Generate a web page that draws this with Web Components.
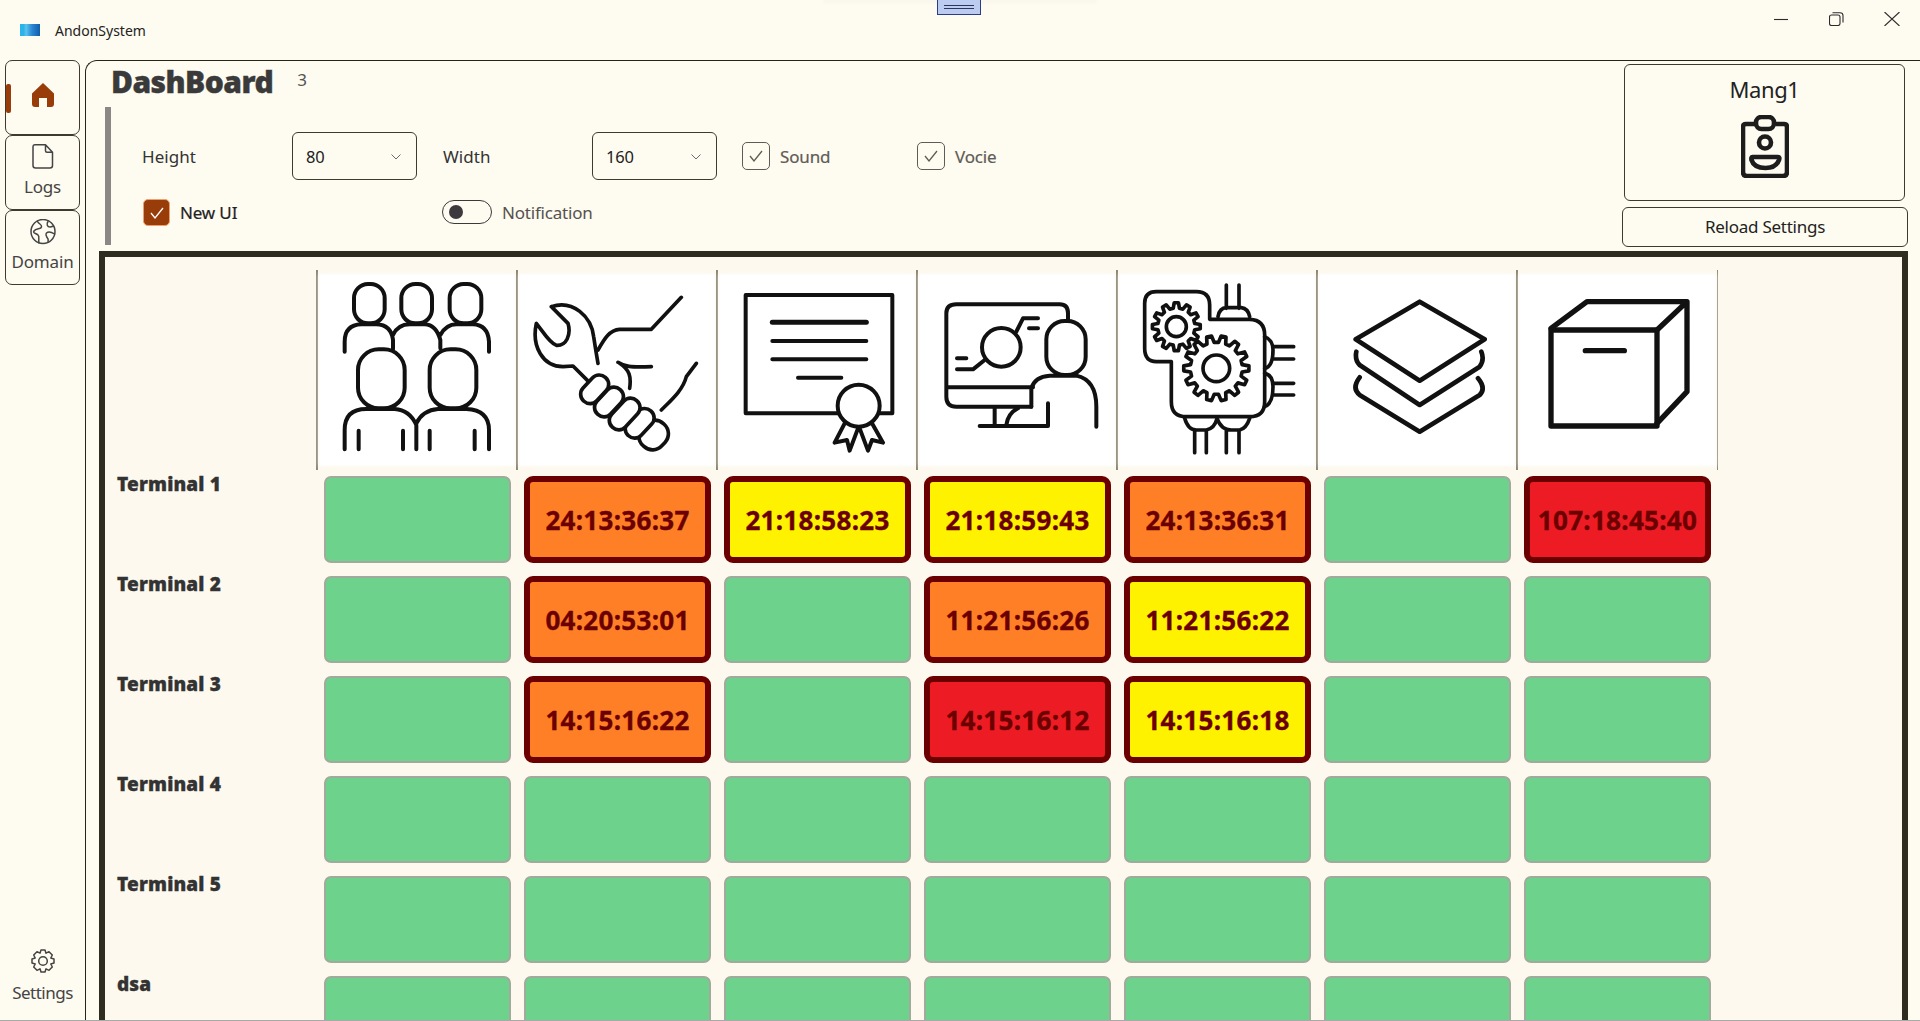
<!DOCTYPE html>
<html lang="en"><head><meta charset="utf-8"><title>AndonSystem</title>
<style>
html,body{margin:0;padding:0;background:#fefbf0;height:100%;overflow:hidden;font-family:"Noto Sans","Open Sans",sans-serif;color:#333}
</style></head><body>
<andon-app></andon-app>
<script>
function def(name, css, html){
  class C extends HTMLElement{
    constructor(){super();const r=this.attachShadow({mode:'open'});
      const h=typeof html==='function'?html(this):html;
      r.innerHTML='<style>'+css+'</style>'+h;}
  }
  customElements.define(name,C);
}
const a=(e,n,d='')=>e.getAttribute(n)??d;

function gear(cx,cy,ro,ri,n){
  let d='';const st=Math.PI*2/n;
  for(let i=0;i<n;i++){
    const t=i*st;
    const p=[[t-st*.32,ri],[t-st*.17,ro],[t+st*.17,ro],[t+st*.32,ri]];
    p.forEach((q,j)=>{const x=cx+q[1]*Math.cos(q[0]),y=cy+q[1]*Math.sin(q[0]);d+=(i==0&&j==0?'M':'L')+x.toFixed(1)+' '+y.toFixed(1)+' ';});
  }
  return d+'Z';
}

const ICONS={
 people:['22 30 600 600',12,`
  <rect x="133" y="72" width="92" height="118" rx="42"/><rect x="275" y="72" width="92" height="118" rx="42"/><rect x="420" y="72" width="95" height="118" rx="42"/>
  <path d="M105 275V245Q105 195 155 193H200Q245 195 250 240V268M250 225Q265 193 300 193H345Q380 195 392 240V265M392 225Q410 193 440 193H490Q535 195 538 245V275"/>
  <rect x="145" y="268" width="140" height="177" rx="62"/><rect x="360" y="268" width="140" height="177" rx="62"/>
  <path d="M105 568V510Q105 447 170 447H255Q300 450 320 495V568M320 490Q340 450 385 447H470Q538 450 538 510V568M147 512V568M280 512V568M360 512V568M495 512V568"/>`],
 wrench:['622 30 600 600',11,`
  <path d="M725 140C790 118 845 170 852 230C855 250 858 270 865 310M725 140L775 190C785 225 770 258 740 256C720 250 700 215 680 190C665 260 700 320 760 320L790 318L840 368"/>
  <path d="M865 270C885 235 900 210 930 208H1025L1115 112M925 307C945 320 960 322 1025 320M930 310C960 330 965 350 960 385M1055 450C1085 420 1120 390 1130 350L1160 310"/>
  <g fill="#fff">
  <rect x="-45" y="-40" width="90" height="80" rx="38" transform="translate(1032 525) rotate(-47)"/>
  <rect x="-50" y="-28" width="100" height="56" rx="27" transform="translate(990 490) rotate(-47)"/>
  <rect x="-54" y="-28" width="108" height="56" rx="27" transform="translate(945 462) rotate(-47)"/>
  <rect x="-50" y="-28" width="100" height="56" rx="27" transform="translate(898 426) rotate(-47)"/>
  <rect x="-48" y="-28" width="96" height="56" rx="27" transform="translate(855 388) rotate(-47)"/>
  </g>`],
 cert:['22 30 600 600',12,`
  <path d="M385 460H108V105H548V460H510"/><circle cx="447" cy="437" r="63"/>
  <path d="M405 490L375 548L412 540L420 572L445 505M487 490L520 548L487 540L475 572L450 505"/>
  <path stroke-width="15" d="M188 187H470"/><path d="M188 243H470M188 298H470M265 353H395"/>`],
 monitor:['622 30 600 600',12,`
  <path d="M1075 180V160Q1075 133 1050 133H740Q710 133 710 160V410Q710 440 740 440H965M710 382H970M855 445V495M925 445Q895 460 890 495M810 498H1015V430"/>
  <rect x="1010" y="183" width="118" height="162" rx="55"/>
  <path d="M965 440V385Q975 350 1020 347H1100Q1160 360 1160 440V500"/>
  <circle cx="875" cy="262" r="58"/>
  <path d="M920 215L940 175H985M958 205H985M742 295H770M742 328H790L825 300"/>`],
 machine:['22 30 600 600',11,`
  <path d="M185 305H140Q105 305 105 265V130Q105 95 140 95H260Q300 95 300 135V178H420Q465 180 465 225V425Q465 470 420 470H230Q185 470 185 425V305"/>
  <path fill="#fff" d="${gear(200,200,72,56,12)}"/><circle cx="200" cy="200" r="30"/>
  <path fill="#fff" d="${gear(320,325,98,78,14)}"/><circle cx="320" cy="325" r="40"/>
  <path d="M325 170Q330 143 350 143H395Q415 145 420 170M350 145V75M388 145V75M465 230Q490 240 490 270Q490 320 465 325M465 340Q490 345 490 380Q490 430 465 440M490 260H552M490 297H552M490 370H552M490 405H552M225 475Q235 510 260 510H290Q315 505 322 475M322 475Q335 510 365 510H390Q410 505 420 475M255 510V578M290 510V578M350 510V578M388 510V578"/>`],
 layers:['622 30 600 600',14,`
  <path d="M740 275Q735 300 750 315L930 435L1110 320Q1125 300 1115 275"/>
  <path d="M750 352Q725 385 750 405L930 515L1110 405Q1130 385 1105 355"/>
  <path fill="#fff" d="M930 125L1125 238L930 362L738 238Z"/>`],
 box:['110 30 600 600',16,`
  <rect x="212" y="210" width="318" height="288"/>
  <path d="M212 205L320 125H620L530 210M620 125V395L530 490M315 272H432"/>`]
};

def('head-icon',`
  :host{display:block;width:200px;height:200px;box-sizing:border-box;border-left:2px solid #8b8877;position:relative}
  :host([last]){width:202px;border-right:1px solid #8b8877}
  .w{position:absolute;left:2px;right:2px;top:5px;bottom:5px;background:#fff;box-shadow:0 0 4px 1px #fff}
  svg{position:absolute;left:-1px;top:0;width:200px;height:200px;fill:none;stroke:#111;stroke-linecap:round;stroke-linejoin:round;filter:blur(.7px)}
`,e=>{const i=ICONS[a(e,'icon')];return `<div class="w"></div><svg viewBox="${i[0]}" stroke-width="${i[1]}">${i[2]}</svg>`});

def('status-cell',`
  :host{display:flex;align-items:center;justify-content:center;box-sizing:border-box;width:187px;height:87px;margin:6px 0 7px 7px;border:2px solid #a1aa9c;border-radius:7px;background:#6dd28c}
  :host([s]){border:6px solid #6b0000;border-radius:9px;color:#6b0000;font:700 26px "Noto Sans","Open Sans",sans-serif;letter-spacing:.3px;-webkit-text-stroke:.35px #6b0000;padding-top:1px}
  :host([s=o]){background:#ff7f27}:host([s=y]){background:#fff200}:host([s=r]){background:#ed1c24}
`,'<slot></slot>');

def('terminal-row',`
  :host{display:grid;grid-template-columns:212px repeat(7,200px);height:100px}
  .l{padding:2px 0 0 12px;font:900 19px/24px "Noto Sans","Open Sans",sans-serif;color:#333;letter-spacing:.15px;-webkit-text-stroke:.3px #333}
`,e=>{
  const cells=a(e,'cells').split(',').map(c=>{
    if(!c) return '<status-cell></status-cell>';
    const [s,t]=c.split(' ');return `<status-cell s="${s}">${t}</status-cell>`;
  }).join('');
  return `<div class="l">${a(e,'name')}</div>${cells}`;
});

def('combo-box',`
  :host{display:flex;align-items:center;box-sizing:border-box;width:125px;height:48px;border:1px solid #3f3a30;border-radius:6px;padding:0 0 0 13px;font-size:16.5px;color:#222;position:relative;letter-spacing:-.2px}
  svg{position:absolute;right:15px;top:21px;width:10px;height:6px;fill:none;stroke:#6b6b6b;stroke-width:1}
`,e=>`${a(e,'value')}<svg viewBox="0 0 10 6"><path d="M.5 .5L5 5L9.500 .5"/></svg>`);

def('check-box',`
  :host{display:flex;align-items:center;gap:10px;font-size:17px;color:#5f5c57;letter-spacing:-.15px;-webkit-text-stroke:.2px #5f5c57}
  i{display:block;box-sizing:border-box;width:28px;height:28px;border:1px solid #5f5c57;border-radius:5px;position:relative}
  svg{position:absolute;left:6px;top:7px;width:14px;height:12px;fill:none;stroke:#5f5c57;stroke-width:1.3}
  :host([on]){color:#222;-webkit-text-stroke:.2px #222}
  :host([on]) i{background:#983c0a;border:1px solid #f0a070;width:27px;height:27px}
  :host([on]) svg{stroke:#fff;left:6px;top:7px}
`,'<i><svg viewBox="0 0 14 12"><path d="M1 6L5 11L13 1"/></svg></i><slot></slot>');

def('toggle-switch',`
  :host{display:flex;align-items:center;gap:10px;font-size:17px;color:#55524e;letter-spacing:-.2px}
  i{display:block;box-sizing:border-box;width:50px;height:24px;border:1px solid #3a3a3a;border-radius:12px;position:relative}
  b{position:absolute;left:6px;top:4px;width:14px;height:14px;border-radius:50%;background:#3d3a3d}
`,'<i><b></b></i><slot></slot>');

def('nav-item',`
  :host{display:flex;flex-direction:column;align-items:center;box-sizing:border-box;width:75px;height:75px;border:1px solid #3f3a30;border-radius:7px;padding-top:8px;font-size:17px;color:#444;line-height:24px;position:relative;letter-spacing:-.15px}
  :host([plain]){border:0;height:auto;padding-top:0;width:81px;color:#444;letter-spacing:-.5px}
  svg{width:26px;height:26px;fill:none;stroke:#444;stroke-width:1.5;stroke-linejoin:round;stroke-linecap:round;display:block;margin-bottom:5px}
  :host([plain]) svg{margin-bottom:7px}
  i{position:absolute;left:0;top:23px;width:5px;height:29px;background:#983c0a;border-radius:2px}
`,e=>{
  const k=a(e,'icon');
  const p={
   home:'<path style="fill:#983c0a;stroke:none" d="M13 1L24 11.5V22Q24 25 21 25H17V16H9V25H5Q2 25 2 22V11.5Z"/>',
   doc:'<path d="M5 .8H15.500L22.500 8.300V21.500Q22.500 24 20 24H5.500Q3 24 3 21.500V3Q3 .8 5 .8ZM15.500 .8V6.800Q15.500 8.300 17 8.300H22.500"/>',
   globe:'<circle cx="13" cy="12.500" r="12"/><path d="M7.500 2.500C9 5.500 12 5 11.500 8C11 10.500 6 9 4 12C2.500 14.500 6 14 8 16C10 18 8 20.500 9 24M18 2.500C16 5.500 17.500 8 20 8C22 8 23 7 23.500 7M24.500 15C21.500 13 18.500 12 16.500 14C15 15.500 17 18.500 18 20C18.500 21 18 22 18 23"/>'
  };
  if(k==='gear'){
    return `<svg viewBox="0 0 26 26"><path d="M11 2H15L16 5.200L19 3.700L22.300 7L20.800 10L24 11V15L20.800 16L22.300 19L19 22.300L16 20.800L15 24H11L10 20.800L7 22.300L3.700 19L5.200 16L2 15V11L5.200 10L3.700 7L7 3.700L10 5.200Z"/><circle cx="13" cy="13" r="4.300"/></svg><slot></slot>`;
  }
  return `${e.hasAttribute('active')?'<i></i>':''}<svg viewBox="0 0 26 26" ${k==='home'?'style="margin-top:13px"':''}>${p[k]}</svg><slot></slot>`;
});

def('side-nav',`
  :host{display:flex;flex-direction:column;box-sizing:border-box;width:85px;padding:0 0 0 5px;height:961px;position:relative}
  ::slotted(:last-child){margin-bottom:16px;margin-left:-3px}
`,'<slot></slot>');

def('title-bar',`
  :host{display:block;height:60px;position:relative;box-sizing:border-box}
  .row{display:flex;align-items:flex-start;height:60px}
  .logo{width:20px;height:12px;margin:24px 15px 0 20px;background:linear-gradient(90deg,#2cb4ea 0 20%,#5cc4ee 30%,#2a86d4 60%,#0f5ea8 100%)}
  .t{margin-top:21px;font-size:14px;line-height:20px;color:#222;letter-spacing:0}
  .sp{flex:1}
  svg{display:block;fill:none;stroke:#2b2b2b;stroke-width:1.1}
  .ctl{display:flex;margin-top:12px;margin-right:20px}
  .min{margin:0 41px 0 0}.res{margin:0 40px 0 0}
  .grip{position:absolute;left:937px;top:0;width:44px;height:15px;box-sizing:border-box;border:1px solid #2b3d86;border-top:0;background:#bccbf0;z-index:3}
  .grip:before,.grip:after{content:"";position:absolute;left:6px;right:6px;height:1px;background:#2b3560;top:5px}
  .grip:after{top:8px}
  .sh{position:absolute;left:824px;width:272px;top:0;height:3px;background:#f8f6ea;filter:blur(1px)}
`,`<div class="sh"></div><div class="grip"></div><div class="row"><div class="logo"></div><div class="t"><slot></slot></div><div class="sp"></div>
  <div class="ctl">
   <svg class="min" width="14" height="14" viewBox="0 0 14 14"><path d="M0 7.500H14"/></svg>
   <svg class="res" width="15" height="14" viewBox="0 0 15 14"><rect x=".5" y="3" width="10.500" height="10.500" rx="2"/><path d="M3.500 .7H11Q14 .7 14 3.500V10.500"/></svg>
   <svg width="16" height="14" viewBox="0 0 16 14"><path d="M.5 0L15.500 14M15.500 0L.5 14"/></svg>
  </div></div>`);

def('user-card',`
  :host{display:flex;flex-direction:column;align-items:center;box-sizing:border-box;width:281px;height:137px;margin:3px 0 0 2px;border:1px solid #3f3a30;border-radius:6px;font-size:22px;line-height:28px;color:#222;padding-top:10px;letter-spacing:-.4px}
  svg{display:block;margin-top:12px;width:48px;height:63px;fill:none;stroke:#1d1d1d;stroke-width:4.6;stroke-linejoin:round}
`,`<slot></slot><svg viewBox="0 0 48 63"><path d="M14 9H5Q2 9 2 12V57Q2 61 6 61H42Q46 61 46 57V12Q46 9 43 9H35"/><rect x="15" y="2" width="18" height="12" rx="5.500" /><circle cx="24" cy="27.500" r="6"/><path d="M11.500 42H37Q39 42 38 45Q35 53 24.500 53Q13 53 10.500 45Q10 42 11.500 42Z"/></svg>`);

def('reload-button',`
  :host{display:flex;align-items:center;justify-content:center;box-sizing:border-box;width:286px;height:40px;margin-top:6px;border:1px solid #3f3a30;border-radius:6px;font-size:17px;color:#222;letter-spacing:-.25px;padding-bottom:1px}
`,'<slot></slot>');

def('dash-controls',`
  :host{display:grid;box-sizing:border-box;margin-left:19px;width:860px;height:138px;border-left:6px solid #8b8786;padding:25px 0 0 32px;
    grid-template-columns:149px 151px 149px 150px 175px 1fr;grid-template-rows:48px 26px;row-gap:19px;align-items:center;font-size:17px;color:#333;letter-spacing:.05px}
`,'<slot></slot>');

def('page-heading',`
  :host{display:flex;align-items:flex-start;height:46px;padding-left:25px}
  h1{margin:1px 0 0;font:900 30px/40px "Noto Sans","Open Sans",sans-serif;color:#3a3a3a;letter-spacing:-.55px;-webkit-text-stroke:.4px #3a3a3a}
  span{margin:8px 0 0 24px;font-size:17px;line-height:22px;color:#555}
`,e=>`<h1>${a(e,'title')}</h1><span>${a(e,'count')}</span>`);

def('andon-grid',`
  :host{display:block;box-sizing:border-box;margin-left:13px;width:1809px;height:800px;border:6px solid #2f2c20;border-bottom:0;background:#fdf9ee;padding-top:13px}
  .head{display:flex;margin-left:211px}
`,`<div class="head">
  <head-icon icon="people"></head-icon><head-icon icon="wrench"></head-icon><head-icon icon="cert"></head-icon><head-icon icon="monitor"></head-icon><head-icon icon="machine"></head-icon><head-icon icon="layers"></head-icon><head-icon icon="box" last></head-icon>
 </div><slot></slot>`);

def('andon-app',`
  :host{display:block;height:1021px;box-sizing:border-box;border-bottom:1px solid #a9a9a9;overflow:hidden;background:#fefbf0}
  .body{display:flex}
  main{flex:1;border-left:1px solid #26231c;border-top:1px solid #26231c;border-top-left-radius:12px;min-width:0;height:961px;overflow:hidden}
  .top{display:grid;grid-template-columns:1fr 298px;height:190px}
`,`<title-bar>AndonSystem</title-bar>
 <div class="body">
  <side-nav>
   <nav-item icon="home" active></nav-item>
   <nav-item icon="doc">Logs</nav-item>
   <nav-item icon="globe">Domain</nav-item>
   <div style="flex:1"></div>
   <nav-item icon="gear" plain>Settings</nav-item>
  </side-nav>
  <main>
   <div class="top">
    <div>
     <page-heading title="DashBoard" count="3"></page-heading>
     <dash-controls>
       <span style="margin-left:-1px">Height</span><combo-box value="80"></combo-box><span>Width</span><combo-box value="160"></combo-box>
       <check-box>Sound</check-box><check-box>Vocie</check-box>
       <check-box on style="grid-column:1/3">New UI</check-box><toggle-switch style="grid-column:3/6;margin-left:-1px">Notification</toggle-switch>
     </dash-controls>
    </div>
    <div><user-card>Mang1</user-card><reload-button>Reload Settings</reload-button></div>
   </div>
   <andon-grid>
    <terminal-row name="Terminal 1" cells=",o 24:13:36:37,y 21:18:58:23,y 21:18:59:43,o 24:13:36:31,,r 107:18:45:40"></terminal-row>
    <terminal-row name="Terminal 2" cells=",o 04:20:53:01,,o 11:21:56:26,y 11:21:56:22,,"></terminal-row>
    <terminal-row name="Terminal 3" cells=",o 14:15:16:22,,r 14:15:16:12,y 14:15:16:18,,"></terminal-row>
    <terminal-row name="Terminal 4" cells=",,,,,,"></terminal-row>
    <terminal-row name="Terminal 5" cells=",,,,,,"></terminal-row>
    <terminal-row name="dsa" cells=",,,,,,"></terminal-row>
   </andon-grid>
  </main>
 </div>`);
</script>
</body></html>
